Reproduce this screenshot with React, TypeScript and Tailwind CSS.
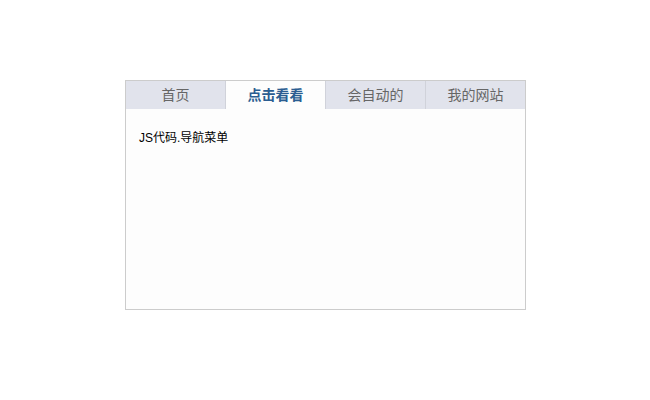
import { useState } from 'react'

const tabs = ['首页', '点击看看', '会自动的', '我的网站']

export default function App() {
  const [active, setActive] = useState(1)

  return (
    <div className="w-[650px] h-[400px] bg-white pt-[80px] pl-[125px]" style={{ fontFamily: '"Liberation Sans", "Noto Sans CJK SC", sans-serif' }}>
      <div className="w-[401px] h-[230px] border border-[#cccccc] bg-[#fdfdfd] flex flex-col">
        <ul className="flex h-[28px] bg-[#d0d2da]">
          {tabs.map((t, i) => (
            <li
              key={t}
              onClick={() => setActive(i)}
              className={
                'w-[99px] h-[28px] flex items-center justify-center text-[14px] cursor-pointer ' +
                (i > 0 ? 'ml-px ' : '') +
                (i === active ? 'bg-[#fdfdfd] text-[#2b5d91] font-bold' : 'bg-[#e1e3ec] text-[#666666]')
              }
            >
              {t}
            </li>
          ))}
        </ul>
        <div className="flex-1 pt-[22px] pl-[13px] text-[12px] text-black leading-[14px]">JS代码.导航菜单</div>
      </div>
    </div>
  )
}
